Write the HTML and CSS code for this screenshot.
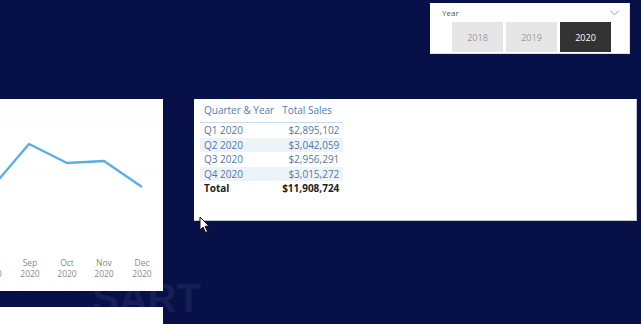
FILE: index.html
```html
<!DOCTYPE html>
<html>
<head>
<meta charset="utf-8">
<link rel="stylesheet" href="styles.css">
</head>
<body>
<div class="page">
  <div class="watermark">SART</div>

  <section class="slicer">
    <div class="slicer-head">
      <span class="slicer-title">Year</span>
      <svg class="chev" width="9" height="6" viewBox="0 0 9 6"><path d="M0.5 0.8 L4.5 4.8 L8.5 0.8" fill="none" stroke="#9a9a9a" stroke-width="1"/></svg>
    </div>
    <div class="slicer-buttons">
      <div class="yr">2018</div>
      <div class="yr">2019</div>
      <div class="yr active">2020</div>
    </div>
  </section>

  <section class="chart">
    <svg width="163" height="192" viewBox="0 0 163 192">
      <line x1="0" y1="21" x2="163" y2="21" stroke="#f2f4f7" stroke-width="1" stroke-dasharray="2 2"/>
      <line x1="0" y1="74" x2="163" y2="74" stroke="#f2f4f7" stroke-width="1" stroke-dasharray="2 2"/>
      <polyline points="-8,88 0,79 29,45 67,64 104,62 142,88" fill="none" stroke="#5aaee3" stroke-width="2.4" stroke-linejoin="round"/>
      <g class="axis">
        <text x="-8" y="167">Aug</text><text x="-8" y="178">2020</text>
        <text x="30" y="167">Sep</text><text x="30" y="178">2020</text>
        <text x="67" y="167">Oct</text><text x="67" y="178">2020</text>
        <text x="104" y="167">Nov</text><text x="104" y="178">2020</text>
        <text x="142" y="167">Dec</text><text x="142" y="178">2020</text>
      </g>
    </svg>
  </section>

  <section class="table-panel">
    <table class="matrix">
      <thead>
        <tr><th class="c1">Quarter &amp; Year</th><th class="c2">Total Sales</th></tr>
      </thead>
      <tbody>
        <tr><td>Q1 2020</td><td class="num">$2,895,102</td></tr>
        <tr class="alt"><td>Q2 2020</td><td class="num">$3,042,059</td></tr>
        <tr><td>Q3 2020</td><td class="num">$2,956,291</td></tr>
        <tr class="alt"><td>Q4 2020</td><td class="num">$3,015,272</td></tr>
        <tr class="total"><td>Total</td><td class="num">$11,908,724</td></tr>
      </tbody>
    </table>
  </section>

  <section class="bottom-panel"></section>

  <svg class="cursor" width="12" height="18" viewBox="0 0 12 18"><path d="M1 1 L1 14 L4 11 L6.5 16.5 L8.5 15.6 L6 10.2 L10 10.2 Z" fill="#ffffff" stroke="#111" stroke-width="1" stroke-linejoin="round"/></svg>
</div>
</body>
</html>
```
FILE: styles.css
```css
html, body {
  margin: 0;
  padding: 0;
}
body {
  background: #081048;
  width: 641px;
  height: 324px;
  overflow: hidden;
  font-family: "Open Sans", "Noto Sans", sans-serif;
}
.page {
  position: relative;
  display: grid;
  grid-template-columns: 92px 71px 31px 236px 200px 7px 4px;
  grid-template-rows: 3px 51px 45px 122px 57px 13px 16px 17px;
  width: 641px;
  height: 324px;
}
.watermark {
  grid-column: 2 / 5;
  grid-row: 6 / 9;
  margin-top: 5px;
  font-family: "Liberation Sans", sans-serif;
  font-weight: bold;
  font-size: 40px;
  line-height: 30px;
  height: 30px;
  color: #161e55;
  z-index: 0;
}
.slicer {
  grid-column: 5 / 6;
  grid-row: 2 / 3;
  background: #ffffff;
  box-sizing: border-box;
  border-right: 1px solid #e2e2e8;
  border-bottom: 1px solid #e2e2e8;
  padding: 3px 10px 0 12px;
  z-index: 1;
}
.slicer-head {
  display: flex;
  justify-content: space-between;
  align-items: center;
  height: 13px;
}
.slicer-title {
  font-size: 8px;
  color: #555;
  line-height: 12px;
}
.slicer-buttons {
  display: grid;
  grid-template-columns: 51px 51px 51px;
  gap: 3px;
  margin: 3px 0 0 10px;
}
.yr {
  height: 30px;
  background: #e6e6e6;
  color: #9a9a9a;
  font-size: 9px;
  display: flex;
  align-items: center;
  justify-content: center;
}
.yr.active {
  background: #333333;
  color: #ffffff;
}
.chart {
  grid-column: 1 / 3;
  grid-row: 4 / 7;
  background: #ffffff;
  z-index: 1;
  overflow: hidden;
}
.chart svg {
  display: block;
  overflow: visible;
}
.axis text {
  font-family: "Open Sans", "Noto Sans", sans-serif;
  font-size: 8.5px;
  fill: #8a8a8a;
  text-anchor: middle;
}
.table-panel {
  grid-column: 4 / 7;
  grid-row: 4 / 5;
  background: #ffffff;
  box-sizing: border-box;
  border-right: 1px solid #c4c7cf;
  border-bottom: 1px solid #c4c7cf;
  padding: 2px 0 0 6px;
  z-index: 1;
}
.matrix {
  border-collapse: collapse;
  font-size: 10px;
  color: #5179a6;
  width: 143px;
}
.matrix th {
  font-weight: normal;
  text-align: left;
  vertical-align: bottom;
  height: 16px;
  line-height: 14px;
  padding: 0 4px 5px 4px;
  border-bottom: 1px solid #c9dced;
  color: #5080b3;
  white-space: nowrap;
}
.matrix th.c1 {
  width: 69px;
}
.matrix td {
  height: 14.5px;
  line-height: 14px;
  padding: 0 4px;
  white-space: nowrap;
}
.matrix td.num {
  text-align: right;
}
.matrix tr.alt td {
  background: #eef3f8;
}
.matrix tr.total td {
  font-weight: bold;
  color: #1e1e1e;
}
.bottom-panel {
  grid-column: 1 / 3;
  grid-row: 8 / 9;
  background: #ffffff;
  z-index: 1;
}
.cursor {
  position: absolute;
  left: 199px;
  top: 216px;
  z-index: 5;
}
```
